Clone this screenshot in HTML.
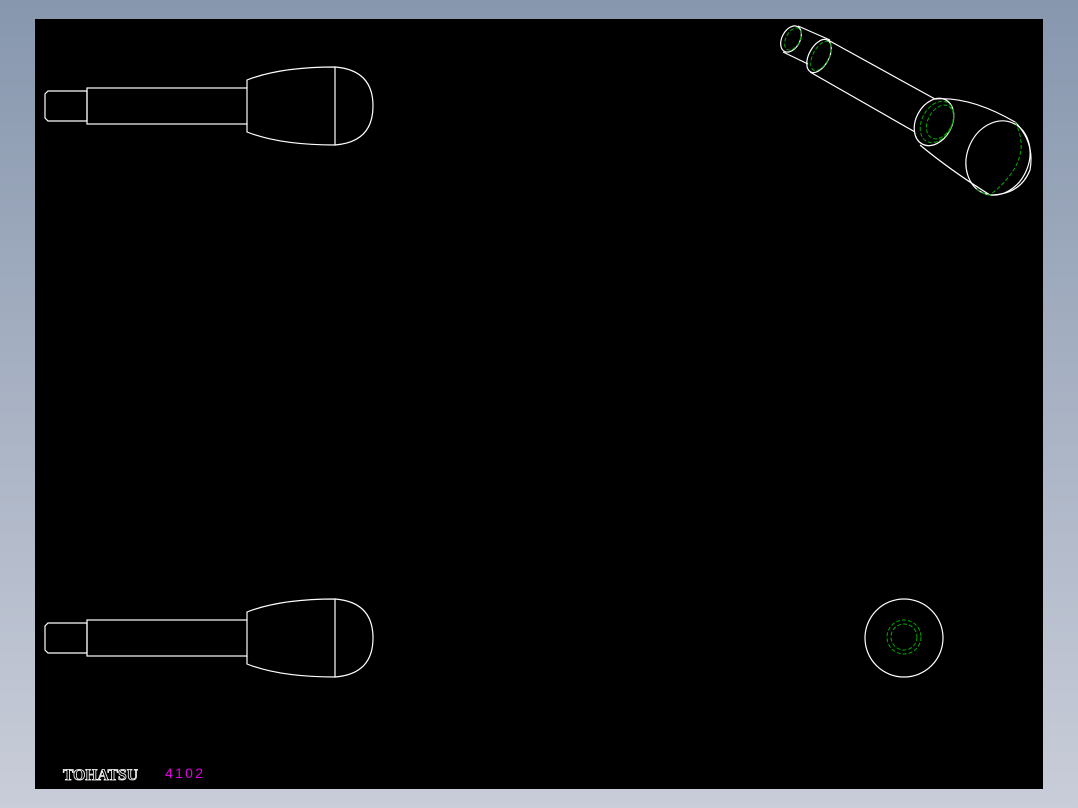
<!DOCTYPE html><html><head><style>
html,body{margin:0;padding:0;width:1078px;height:808px;overflow:hidden;background:linear-gradient(#8797ae,#c9cdd9);}
svg{position:absolute;left:0;top:0}
</style></head><body>
<svg width="1078" height="808" viewBox="0 0 1078 808">
<rect x="35" y="19" width="1008" height="770" fill="#000"/>
<g fill="none" stroke="#fff" stroke-width="1.2">
<g id="h">
<path d="M48 91 H87 V121 H48 L45 118 V94 Z"/>
<rect x="87" y="88" width="160" height="36"/>
<path d="M247 124 V132 Q280 145 335 145 V67 Q280 67 247 80 V88"/>
<path d="M335 67 Q373 70 373 106 Q373 142 335 145"/>
</g>
<use href="#h" y="532"/>
<path d="M798 26 L830 40 M783 52 L808 64"/>
<ellipse cx="791" cy="39" rx="9" ry="14" transform="rotate(28 791 39)"/>
<ellipse cx="819" cy="56" rx="10" ry="18" transform="rotate(28 819 56)"/>
<path d="M828 40 L935 99 M810 72 L915 132"/>
<path d="M935 99 Q970 96 1015 122 Q1035 142 1030 170 Q1020 195 990 195 Q950 170 920 145"/>
<ellipse cx="934" cy="122" rx="18" ry="25" transform="rotate(28 934 122)"/>
<ellipse cx="998" cy="158" rx="31" ry="38" transform="rotate(22 998 158)"/>
<circle cx="904" cy="638" r="39"/>
</g>
<g fill="none" stroke="#0a0" stroke-width="1" stroke-dasharray="4 2">
<ellipse cx="793" cy="39" rx="7" ry="12" transform="rotate(28 793 39)"/>
<ellipse cx="821" cy="56" rx="8" ry="16" transform="rotate(28 821 56)"/>
<ellipse cx="937" cy="122" rx="15" ry="22" transform="rotate(28 937 122)"/>
<ellipse cx="940" cy="122" rx="12" ry="18" transform="rotate(28 940 122)"/>
<path d="M1015 122 Q1035 160 990 195 Q985 195 975 188"/>
<circle cx="904" cy="637" r="17"/>
<circle cx="904" cy="637" r="13"/>
</g>
<text x="63" y="780" font-family="Liberation Serif,serif" font-weight="bold" font-size="16" textLength="75" lengthAdjust="spacingAndGlyphs" fill="#000" stroke="#fff" stroke-width="0.8">TOHATSU</text>
<text x="165" y="778" font-family="Liberation Sans,sans-serif" font-size="14" textLength="38" lengthAdjust="spacing" fill="#e000e0">4102</text>
</svg>
</body></html>
